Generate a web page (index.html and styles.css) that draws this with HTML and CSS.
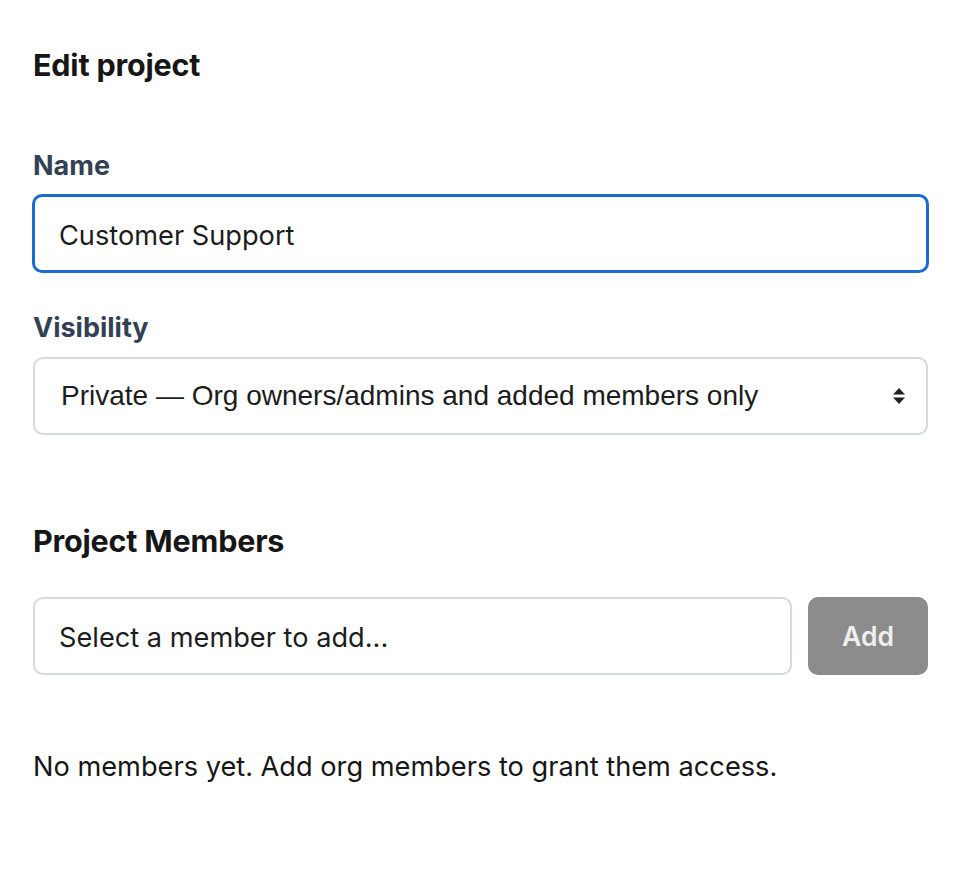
FILE: index.html
```html
<!DOCTYPE html>
<html lang="en">
<head>
<meta charset="utf-8">
<title>Edit project</title>
<link rel="stylesheet" href="styles.css">
</head>
<body>
<main class="page">
  <h1 class="title">Edit project</h1>

  <label class="label label-name" for="name">Name</label>
  <div class="field field-focus">
    <span class="field-text">Customer Support</span>
  </div>

  <label class="label label-vis" for="vis">Visibility</label>
  <div class="field field-select">
    <span class="select-text">Private — Org owners/admins and added members only</span>
    <svg class="arrows" width="14" height="18" viewBox="0 0 14 18" aria-hidden="true">
      <path d="M7 1 L13 7.5 L1 7.5 Z" fill="#222"/>
      <path d="M7 17 L13 10.5 L1 10.5 Z" fill="#222"/>
    </svg>
  </div>

  <h2 class="section">Project Members</h2>
  <div class="add-row">
    <div class="field field-member">
      <span class="field-text">Select a member to add...</span>
    </div>
    <button class="btn-add" type="button">Add</button>
  </div>

  <p class="empty">No members yet. Add org members to grant them access.</p>
</main>
</body>
</html>
```

FILE: styles.css
```css
html, body {
  margin: 0;
  padding: 0;
  background: #ffffff;
}
body {
  font-family: Inter, "Noto Sans", "Liberation Sans", sans-serif;
  color: #1d1d1f;
}
.page {
  padding: 47px 32px 40px 33px;
  display: flex;
  flex-direction: column;
}
.title {
  margin: 0;
  font-size: 30.5px;
  line-height: 36px;
  font-weight: 700;
  color: #161616;
  letter-spacing: -0.2px;
}
.label {
  display: block;
  font-size: 27px;
  line-height: 32px;
  font-weight: 700;
  color: #334155;
}
.label-name { margin-top: 67px; }
.label-vis { margin-top: 39px; }
.field {
  box-sizing: border-box;
  height: 79px;
  border: 2px solid #d3dbe1;
  border-radius: 10px;
  display: flex;
  align-items: center;
  padding: 0 24px;
  background: #fff;
}
.field-focus {
  margin-top: 12px;
  margin-left: -1px;
  margin-right: -1px;
  border: 3px solid #1a6bd3;
  padding-left: 24px;
  padding-top: 3px;
}
.field-text {
  font-size: 27.2px;
  color: #1c1c1c;
}
.field-select {
  margin-top: 13px;
  height: 78px;
  justify-content: space-between;
  padding: 0 20px 0 26px;
}
.select-text {
  font-family: "Liberation Sans", Arial, sans-serif;
  font-size: 28px;
  color: #1c1c1c;
}
.arrows { display: block; }
.section {
  margin: 88px 0 0;
  font-size: 30.5px;
  line-height: 36px;
  font-weight: 700;
  color: #161616;
  letter-spacing: -0.2px;
}
.add-row {
  margin-top: 38px;
  display: flex;
  gap: 16px;
}
.field-member {
  flex: 1;
  height: 78px;
  padding-top: 2px;
}
.btn-add {
  box-sizing: border-box;
  width: 120px;
  height: 78px;
  border: none;
  border-radius: 10px;
  background: #8c8c8c;
  color: #efefef;
  font-family: Inter, "Liberation Sans", sans-serif;
  font-size: 26.5px;
  font-weight: 600;
}
.empty {
  margin: 76px 0 0;
  font-size: 27.2px;
  line-height: 32px;
  color: #161616;
}
```
